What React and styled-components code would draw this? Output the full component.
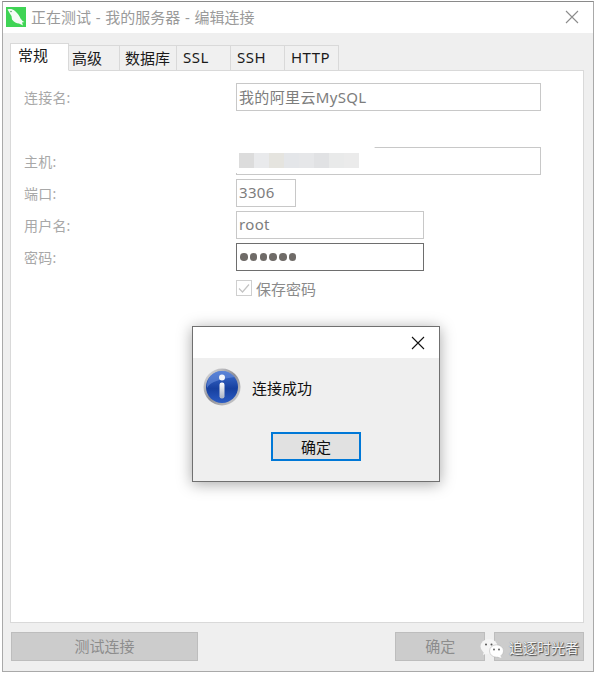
import React from "react";
import styled, { createGlobalStyle } from "styled-components";

const Global = createGlobalStyle`
  html, body { margin: 0; padding: 0; background: #fff; }
  body { font-family: "Noto Sans", "Noto Sans CJK SC", sans-serif; }
  * { box-sizing: border-box; }
`;
const Page = styled.div`
  position: relative;
  width: 597px;
  height: 675px;
  overflow: hidden;
  padding: 1px 3px 3px 2px;
`;
const Win = styled.div`
  width: 592px;
  height: 671px;
  border: 1px solid #a9a9a9;
  border-top-color: #8a8a8a;
  background: #efefef;
  display: flex;
  flex-direction: column;
`;
const TitleBar = styled.div`
  height: 31px;
  flex: none;
  background: #fff;
  display: flex;
  align-items: center;
  padding: 0 14px 1px 3px;
  gap: 5px;
  color: #9a9a9a;
  font-size: 15px;
`;
const TitleText = styled.span`
  flex: 1;
  white-space: nowrap;
  word-spacing: 0.8px;
  padding-bottom: 2px;
`;
const Body = styled.div`
  flex: 1;
  display: flex;
  flex-direction: column;
  padding: 10px 9px 10px 7px;
`;
const Tabs = styled.div`
  display: flex;
  height: 28px;
  align-items: flex-end;
  position: relative;
  z-index: 1;
  margin-bottom: -1px;
`;
const Tab = styled.div`
  width: ${(p) => p.$w}px;
  height: ${(p) => (p.$active ? 28 : 26)}px;
  background: ${(p) => (p.$active ? "#fff" : "#f0f0f0")};
  border: 1px solid #d9d9d9;
  border-left-width: ${(p) => (p.$active ? 1 : 0)}px;
  border-bottom-color: ${(p) => (p.$active ? "#fff" : "#d9d9d9")};
  font-size: 15px;
  color: #1a1a1a;
  display: flex;
  align-items: center;
  padding-left: ${(p) => p.$pad}px;
  padding-bottom: ${(p) => (p.$active ? 5 : 2)}px;
  letter-spacing: ${(p) => (p.$latin ? "0.5px" : "0")};
`;
const Panel = styled.div`
  flex: 1;
  background: #fff;
  border: 1px solid #d9d9d9;
  padding: 12px 42px 0 13px;
  display: grid;
  grid-template-columns: 212px 1fr;
  grid-auto-rows: 28px;
  row-gap: 4px;
  align-content: start;
`;
const Label = styled.div`
  font-size: 14px;
  color: #a8a8a8;
  display: flex;
  align-items: center;
  letter-spacing: 0.2px;
`;
const Field = styled.div`
  height: 28px;
  width: ${(p) => p.$w}px;
  border: 1px solid ${(p) => (p.$focus ? "#6e6e6e" : "#c8c8c8")};
  background: #fff;
  color: #7d7d7d;
  font-size: 15px;
  letter-spacing: 0.35px;
  display: flex;
  align-items: center;
  padding: 0 0 2px 2px;
  white-space: nowrap;
`;
const Spacer = styled.div`
  grid-column: 1 / -1;
`;
const Dots = styled.div`
  display: flex;
  gap: 2.3px;
  padding: 2px 0 0 1px;
`;
const Dot = styled.span`
  width: 7.5px;
  height: 7.5px;
  border-radius: 50%;
  background: #6f6b68;
`;
const CheckRow = styled.div`
  grid-column: 2;
  display: flex;
  align-items: center;
  gap: 4px;
  font-size: 15px;
  color: #8a8a8a;
  padding-bottom: 2px;
`;
const CheckBox = styled.span`
  width: 16px;
  height: 16px;
  border: 1px solid #cfcfcf;
  display: flex;
  align-items: center;
  justify-content: center;
`;
const Footer = styled.div`
  height: 29px;
  margin-top: 9px;
  display: flex;
  padding-left: 1px;
`;
const DisabledBtn = styled.div`
  width: ${(p) => p.$w}px;
  margin-right: ${(p) => p.$after || 0}px;
  border: 1px solid #bdbdbd;
  background: #cccccc;
  color: #8d8d8d;
  font-size: 15px;
  padding-bottom: 2px;
  display: flex;
  align-items: center;
  justify-content: center;
`;
const Smudge = styled.div`
  position: absolute;
  left: 226px;
  top: 138px;
  width: 150px;
  height: 35px;
  border-radius: 14px 20px 24px 12px;
  background: #fff;
  padding: 15px 0 0 13px;
  display: flex;
`;
const Pixel = styled.span`
  width: 15px;
  height: 15px;
  background: ${(p) => p.$c};
`;
const Dialog = styled.div`
  position: absolute;
  left: 192px;
  top: 326px;
  width: 248px;
  height: 156px;
  border: 1px solid #707070;
  background: #efefef;
  box-shadow: 0 2px 14px rgba(0, 0, 0, 0.35);
  display: flex;
  flex-direction: column;
`;
const DialogTitle = styled.div`
  height: 31px;
  background: #fff;
  display: flex;
  justify-content: flex-end;
  align-items: center;
  padding-right: 14px;
`;
const DialogMsg = styled.div`
  display: flex;
  align-items: center;
  gap: 11px;
  padding: 10px 0 0 10px;
  font-size: 15px;
  color: #111;
`;
const DialogText = styled.span`
  margin-top: 1px;
`;
const DialogFoot = styled.div`
  display: flex;
  justify-content: center;
  padding: 26px 0 0 0;
`;
const OkBtn = styled.div`
  width: 90px;
  height: 29px;
  border: 2px solid #0078d7;
  background: #e1e1e1;
  font-size: 15px;
  color: #111;
  padding-bottom: 1px;
  display: flex;
  align-items: center;
  justify-content: center;
`;
const Watermark = styled.div`
  position: absolute;
  left: 480px;
  top: 637px;
  display: flex;
  align-items: center;
  gap: 5px;
  font-size: 14px;
  color: #f2f2f2;
  text-shadow: 1px 1px 1px #4a4a4a, 0 0 1px #555;
`;
const WatermarkText = styled.span`
  padding-bottom: 2px;
  letter-spacing: 0px;
`;

const Close = ({ color, size = 14 }) => (
  <svg width={size} height={size} viewBox="0 0 14 14">
    <path d="M1 1L13 13M13 1L1 13" stroke={color} strokeWidth="1.1" fill="none" />
  </svg>
);

const Logo = () => (
  <svg width="20" height="20" viewBox="0 0 20 20">
    <rect width="20" height="20" fill="#3fd455" />
    <path d="M1.5 2.5C4 1.5 6.5 2 9 4C11.5 6 13.5 9 14.5 11.5C15.5 13 17 14.5 18.5 15L16 15.5L17 18.5L13 16.5C10.5 16.5 8 15 6 12.5L5.5 9C4.5 7.5 3 5 1.5 2.5Z" fill="#f4fbf5" />
    <circle cx="5" cy="4.5" r="0.7" fill="#3a8a4a" />
  </svg>
);

const InfoIcon = () => (
  <svg width="38" height="38" viewBox="0 0 38 38">
    <defs>
      <linearGradient id="rim" x1="0" y1="0" x2="1" y2="1">
        <stop offset="0" stopColor="#e8e8e8" />
        <stop offset="0.5" stopColor="#8f8f96" />
        <stop offset="1" stopColor="#d5d5d5" />
      </linearGradient>
      <linearGradient id="blue" x1="0" y1="0" x2="0" y2="1">
        <stop offset="0" stopColor="#3f6fd0" />
        <stop offset="0.55" stopColor="#17409f" />
        <stop offset="1" stopColor="#2b5cc4" />
      </linearGradient>
      <linearGradient id="bar" x1="0" y1="0" x2="0" y2="1">
        <stop offset="0" stopColor="#ffffff" />
        <stop offset="1" stopColor="#a9b2c4" />
      </linearGradient>
    </defs>
    <circle cx="19" cy="19" r="18.5" fill="url(#rim)" />
    <circle cx="19" cy="19" r="16" fill="url(#blue)" />
    <path d="M4 20C8 13 18 11 32 9C28 4 23 3 19 3C10 3 3 10 4 20Z" fill="#6f93de" opacity="0.55" />
    <circle cx="19" cy="9.5" r="3" fill="#f4f6fb" />
    <rect x="16.5" y="14.5" width="5" height="16" rx="2.2" fill="url(#bar)" />
  </svg>
);

const WeChat = () => (
  <svg width="24" height="21" viewBox="0 0 24 21">
    <ellipse cx="9" cy="8.5" rx="8.5" ry="7.5" fill="#f5f5f5" />
    <path d="M4 13L3 17L8 15Z" fill="#f5f5f5" />
    <ellipse cx="16.5" cy="13" rx="7" ry="6.2" fill="#fff" stroke="#aaa" strokeWidth="0.5" />
    <path d="M20 17L21.5 20L17 18.5Z" fill="#fff" />
    <circle cx="6" cy="6.5" r="1" fill="#555" />
    <circle cx="11.5" cy="6.5" r="1" fill="#555" />
    <circle cx="14" cy="11.5" r="0.9" fill="#555" />
    <circle cx="19" cy="11.5" r="0.9" fill="#555" />
  </svg>
);

const tabs = [
  { t: "常规", w: 59, pad: 7, active: true },
  { t: "高级", w: 51, pad: 3 },
  { t: "数据库", w: 57, pad: 5 },
  { t: "SSL", w: 54, pad: 6, latin: true },
  { t: "SSH", w: 54, pad: 6, latin: true },
  { t: "HTTP", w: 54, pad: 6, latin: true },
];
const pixels = ["#dcdcdc", "#e9eaec", "#e5e4df", "#e4e6e9", "#e6e7e9", "#e1e2e4", "#e9eaea", "#ebebeb"];

export default function App() {
  return (
    <Page>
      <Global />
      <Win>
        <TitleBar>
          <Logo />
          <TitleText>正在测试 - 我的服务器 - 编辑连接</TitleText>
          <Close color="#8c8c8c" />
        </TitleBar>
        <Body>
          <Tabs>
            {tabs.map((x) => (
              <Tab key={x.t} $w={x.w} $pad={x.pad} $active={x.active} $latin={x.latin}>
                {x.t}
              </Tab>
            ))}
          </Tabs>
          <Panel>
            <Label>连接名:</Label>
            <Field $w={305}>我的阿里云MySQL</Field>
            <Spacer />
            <Label>主机:</Label>
            <Field $w={305} />
            <Label>端口:</Label>
            <Field $w={60}>3306</Field>
            <Label>用户名:</Label>
            <Field $w={188}>root</Field>
            <Label>密码:</Label>
            <Field $w={188} $focus>
              <Dots>
                {[0, 1, 2, 3, 4, 5].map((i) => (
                  <Dot key={i} />
                ))}
              </Dots>
            </Field>
            <CheckRow>
              <CheckBox>
                <svg width="14" height="14" viewBox="0 0 14 14">
                  <path d="M2 7.5L5.5 11L12 3.5" stroke="#c4c4c4" strokeWidth="1.2" fill="none" />
                </svg>
              </CheckBox>
              保存密码
            </CheckRow>
          </Panel>
          <Footer>
            <DisabledBtn $w={188} $after={197}>测试连接</DisabledBtn>
            <DisabledBtn $w={91} $after={9}>确定</DisabledBtn>
            <DisabledBtn $w={90} />
          </Footer>
        </Body>
      </Win>
      <Smudge>
        {pixels.map((c, i) => (
          <Pixel key={i} $c={c} />
        ))}
      </Smudge>
      <Dialog>
        <DialogTitle>
          <Close color="#111" />
        </DialogTitle>
        <DialogMsg>
          <InfoIcon />
          <DialogText>连接成功</DialogText>
        </DialogMsg>
        <DialogFoot>
          <OkBtn>确定</OkBtn>
        </DialogFoot>
      </Dialog>
      <Watermark>
        <WeChat />
        <WatermarkText>追逐时光者</WatermarkText>
      </Watermark>
    </Page>
  );
}
